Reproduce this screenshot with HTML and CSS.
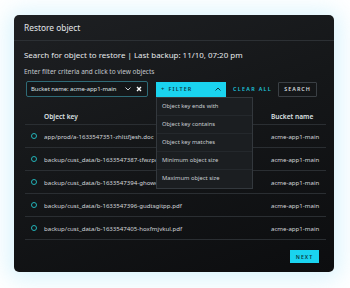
FILE: index.html
```html
<!DOCTYPE html>
<html>
<head>
<meta charset="utf-8">
<link rel="stylesheet" href="styles.css">
</head>
<body>
<div class="wrap">
  <div class="card">
    <div class="card-header">Restore object</div>
    <div class="card-body">
      <div class="subtitle">Search for object to restore | Last backup: 11/10, 07:20 pm</div>
      <div class="hint">Enter filter criteria and click to view objects</div>
      <div class="toolbar">
        <div class="chip">
          <span class="chip-text">Bucket name: acme-app1-main</span>
          <svg class="chev" width="6" height="4" viewBox="0 0 6 4"><path d="M0.5 0.5 L3 3 L5.5 0.5" fill="none" stroke="#c9ced3" stroke-width="1"/></svg>
          <svg class="x" width="6" height="6" viewBox="0 0 6 6"><path d="M1 1 L5 5 M5 1 L1 5" stroke="#ffffff" stroke-width="1.4"/></svg>
        </div>
        <div class="filter-wrap">
          <div class="filter-btn">
            <span class="plus">+</span><span class="filter-label">FILTER</span>
            <svg class="up" width="6" height="4" viewBox="0 0 6 4"><path d="M0.5 3.5 L3 1 L5.5 3.5" fill="none" stroke="#0b3a44" stroke-width="1"/></svg>
          </div>
          <ul class="menu">
            <li>Object key ends with</li>
            <li>Object key contains</li>
            <li>Object key matches</li>
            <li>Minimum object size</li>
            <li>Maximum object size</li>
          </ul>
        </div>
        <div class="clear">CLEAR ALL</div>
        <div class="search-btn">SEARCH</div>
      </div>
      <div class="table">
        <div class="thead">
          <span class="col-key">Object key</span>
          <span class="col-bucket">Bucket name</span>
        </div>
        <div class="row"><span class="radio"></span><span class="key">app/prod/a-1633547351-zhlttfjesh.doc</span><span class="bucket">acme-app1-main</span></div>
        <div class="row"><span class="radio"></span><span class="key">backup/cust_data/b-1633547387-tfwzpqkxle.pdf</span><span class="bucket">acme-app1-main</span></div>
        <div class="row"><span class="radio"></span><span class="key">backup/cust_data/b-1633547394-ghowcyndll.pdf</span><span class="bucket">acme-app1-main</span></div>
        <div class="row"><span class="radio"></span><span class="key">backup/cust_data/b-1633547396-gudtsgitpp.pdf</span><span class="bucket">acme-app1-main</span></div>
        <div class="row"><span class="radio"></span><span class="key">backup/cust_data/b-1633547405-hoxfmjvkul.pdf</span><span class="bucket">acme-app1-main</span></div>
      </div>
      <div class="footer"><div class="next-btn">NEXT</div></div>
    </div>
  </div>
</div>
</body>
</html>
```
FILE: styles.css
```css
* { box-sizing: border-box; }
html, body { margin: 0; padding: 0; background: #ffffff; }
body { font-family: "Noto Sans", "Open Sans", sans-serif; width: 350px; height: 288px; overflow: hidden; }
.wrap { padding: 15px 16px 16px 14px; }
.card {
  width: 320px; height: 257px; border-radius: 5px;
  background: linear-gradient(160deg, #1e2023 0%, #151719 45%, #0c0d0f 100%);
  box-shadow: 0 2px 22px 6px rgba(140, 220, 250, 0.32);
  display: flex; flex-direction: column;
}
.card-header {
  height: 26px; line-height: 25px; padding-left: 10px;
  font-size: 8.4px; color: #e2e5e8;
  border-bottom: 1px solid #2c3034;
}
.card-body { padding: 0 8px 0 10px; display: flex; flex-direction: column; }
.subtitle { margin-top: 7px; line-height: 14px; font-size: 7.95px; color: #e6e9ec; }
.hint { margin-top: 5px; line-height: 10px; font-size: 6.5px; color: #c3c8cd; }
.toolbar { margin-top: 4px; margin-left: 2px; height: 16px; display: flex; align-items: center; }
.chip {
  width: 122px; height: 16px; border: 1px solid #2f6b77; border-radius: 2px;
  display: flex; align-items: center; padding: 0 5px 0 4px; background: #141719;
}
.chip-text { flex: 1; font-size: 5.95px; color: #dfe3e6; white-space: nowrap; letter-spacing: -0.05px; }
.chev { margin-right: 5px; }
.filter-wrap { position: relative; margin-left: 8px; }
.filter-btn {
  width: 70px; height: 15px; background: #1ad3ef; display: flex; align-items: center;
  padding: 0 5px 0 5px; color: #0b3a44; font-size: 5.4px; letter-spacing: 1.1px; font-weight: 600;
}
.plus { margin-right: 3px; font-size: 6px; }
.filter-label { flex: 1; }
.menu {
  position: absolute; left: 0; top: 15px; width: 97px; margin: 0; padding: 0; list-style: none;
  background: #1b1e21; border: 1px solid #33383d; z-index: 5;
}
.menu li {
  height: 18px; line-height: 17px; padding-left: 5px; font-size: 5.8px; color: #c8cdd2;
  border-bottom: 1px solid #24282c;
}
.menu li:last-child { border-bottom: none; }
.clear { margin-left: 7px; font-size: 5.4px; letter-spacing: 1.3px; color: #1cc4dc; font-weight: 600; }
.search-btn {
  margin-left: 6px; width: 39px; height: 15px; border: 1px solid #3a3f44; border-radius: 1px;
  display: flex; align-items: center; justify-content: center;
  font-size: 5.4px; letter-spacing: 1px; color: #d6dadd; font-weight: 600;
}
.table { margin-top: 12px; margin-left: 1px; width: 301px; }
.thead {
  height: 16px; display: flex; align-items: center;
  padding: 0 0 0 19px; border-bottom: 1px solid #2a2e32; font-size: 6.6px; font-weight: 600; color: #dde1e4;
}
.col-key { flex: 1; }
.col-bucket { width: 55px; }
.row {
  height: 23px; display: flex; align-items: center; border-bottom: 1px solid #2a2e32;
  padding: 0 0 0 6px; font-size: 6.1px; color: #d3d7db;
}
.radio { width: 6px; height: 6px; border: 1.2px solid #22b3b8; border-radius: 50%; flex: none; }
.key { flex: 1; margin-left: 7px; white-space: nowrap; overflow: hidden; }
.bucket { width: 55px; flex: none; white-space: nowrap; }
.footer { display: flex; justify-content: flex-end; margin-top: 10px; padding-right: 7px; }
.next-btn {
  width: 29px; height: 13px; background: #1ad3ef; display: flex; align-items: center; justify-content: center;
  font-size: 5.2px; letter-spacing: 1px; color: #0b3a44; font-weight: 600;
}
```
